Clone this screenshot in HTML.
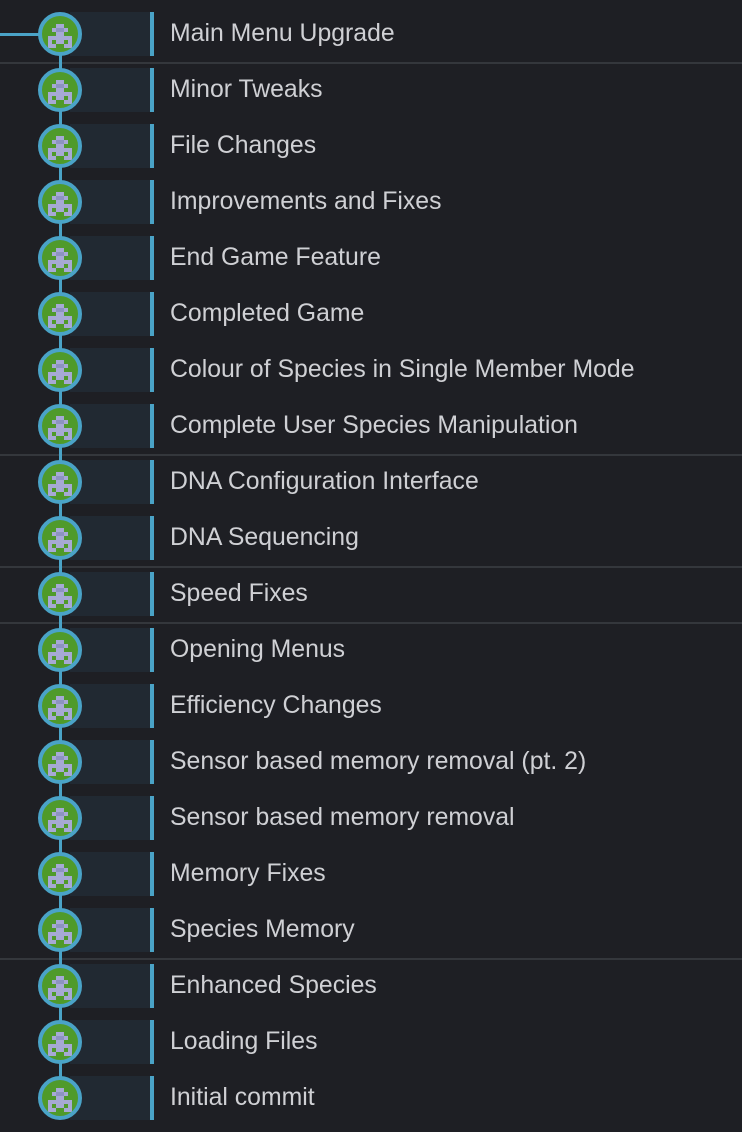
<!DOCTYPE html>
<html><head><style>
html,body{margin:0;padding:0;background:#1e1f24;width:742px;height:1132px;overflow:hidden;font-family:"Liberation Sans",sans-serif}
.row{position:absolute;left:0;width:742px;height:56px;z-index:2}
.box{position:absolute;left:70px;top:12px;width:80px;height:44px;background:#212932}
.bar{position:absolute;left:150px;top:12px;width:4px;height:44px;background:#4aa3c7}
.av{position:absolute;left:38px;top:12px;width:36px;height:36px;border:4px solid #4aa3c7;border-radius:50%;background:#4f9a2a;overflow:hidden}
.t{position:absolute;left:170px;top:16px;font-size:24.8px;color:#cfd0d4;line-height:36px;white-space:nowrap}
.sep{position:absolute;left:0;width:742px;height:2px;background:#34373c;z-index:1}
.vl{position:absolute;left:59px;width:3px;background:#4aa3c7;z-index:3}
</style></head><body>
<div class="vl" style="top:34px;height:1064px;z-index:1"></div>
<div class="vl" style="top:54px;height:16px"></div>
<div class="vl" style="top:446px;height:16px"></div>
<div class="vl" style="top:558px;height:16px"></div>
<div class="vl" style="top:614px;height:16px"></div>
<div class="vl" style="top:950px;height:16px"></div>
<div style="position:absolute;left:0;top:33px;width:40px;height:3px;background:#4aa3c7"></div>
<div class="sep" style="top:62px"></div>
<div class="sep" style="top:454px"></div>
<div class="sep" style="top:566px"></div>
<div class="sep" style="top:622px"></div>
<div class="sep" style="top:958px"></div>
<svg width="0" height="0" style="position:absolute"><defs><g id="pix" fill="#a6a9d4">
<rect x="8" y="4" width="8" height="4"/><rect x="4" y="8" width="4" height="4"/><rect x="16" y="8" width="4" height="4"/><rect x="8" y="8" width="8" height="4" fill="#8d93c0"/><rect x="8" y="12" width="8" height="4"/><rect x="0" y="16" width="24" height="4"/><rect x="0" y="20" width="4" height="4"/><rect x="8" y="20" width="8" height="4"/><rect x="20" y="20" width="4" height="4"/><rect x="0" y="24" width="8" height="4"/><rect x="16" y="24" width="8" height="4"/></g></defs></svg>
<div id="rows"></div>
<script>
var t=["Main Menu Upgrade","Minor Tweaks","File Changes","Improvements and Fixes","End Game Feature","Completed Game","Colour of Species in Single Member Mode","Complete User Species Manipulation","DNA Configuration Interface","DNA Sequencing","Speed Fixes","Opening Menus","Efficiency Changes","Sensor based memory removal (pt. 2)","Sensor based memory removal","Memory Fixes","Species Memory","Enhanced Species","Loading Files","Initial commit"];
var h="";
t.forEach(function(s,i){h+='<div class="row" style="top:'+(i*56)+'px"><div class="box"></div><div class="bar"></div><div class="av"><svg width="36" height="36" style="position:absolute;left:0;top:0"><use href="#pix" x="6" y="4"/></svg></div><div class="t">'+s.replace(/&/g,"&amp;")+'</div></div>';});
document.getElementById("rows").innerHTML=h;
</script>
</body></html>
